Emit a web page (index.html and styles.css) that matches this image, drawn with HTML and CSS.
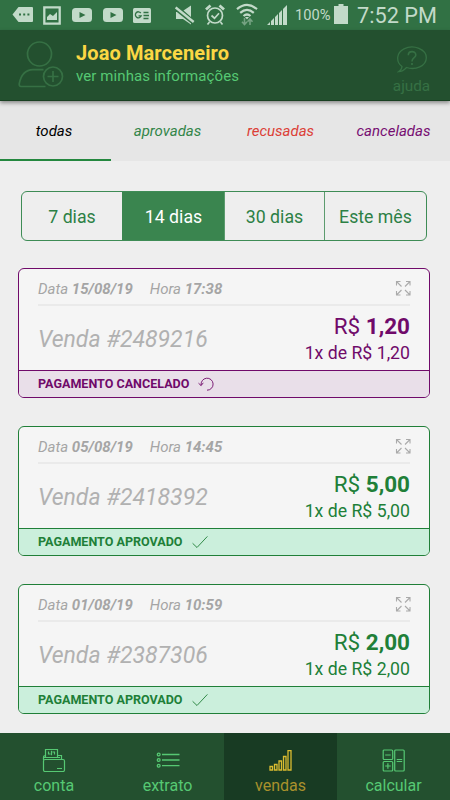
FILE: index.html
```html
<!DOCTYPE html>
<html lang="pt-BR">
<head>
<meta charset="utf-8">
<title>Vendas</title>
<link rel="stylesheet" href="styles.css">
</head>
<body>
<svg class="defs" width="0" height="0">
  <symbol id="expand" viewBox="0 0 16 16"><path d="M1.500 5.500V1.500h4M1.500 1.500l5 5M11 1.500h4v4M15 1.500L10 6.500M1.500 11v4h4M1.500 15l5-5M15 11v4h-4M15 15L10 10" fill="none" stroke="currentColor" stroke-width="1.100"/></symbol>
  <symbol id="check" viewBox="0 0 16 14"><path d="M.6 8.300L5 12.500 15.400 1.400" fill="none" stroke="currentColor" stroke-width=".9"/></symbol>
  <symbol id="undo" viewBox="0 0 16 14"><path d="M3.200 8.300A6 6 0 1 1 9 13.200M.5 6.200l2.600 2.400 2.200-2.800" fill="none" stroke="currentColor" stroke-width=".9"/></symbol>
</svg>
<div class="status">
  <svg class="s-msg" width="22" height="18" viewBox="0 0 22 18"><path d="M6.500 1H20a1 1 0 0 1 1 1v13a1 1 0 0 1-1 1H6.500L.5 8.500z" fill="#c2dac9"/><path d="M7 7.500h2v2H7zm4.200 0h2v2h-2zm4.200 0h2v2h-2z" fill="#317144"/></svg>
  <svg class="s-img" width="18" height="19" viewBox="0 0 18 19"><path d="M1.300 1.300h15.400v16.400H1.300z" fill="none" stroke="#c2dac9" stroke-width="2.300"/><path d="M4 14v-3l3-3 3 2 4-4v8z" fill="#c2dac9"/></svg>
  <svg class="s-yt" width="20" height="14" viewBox="0 0 20 14"><rect width="20" height="14" rx="3.500" fill="#c2dac9"/><path d="M7.500 4v6l6-3z" fill="#317144"/></svg>
  <svg class="s-yt" width="20" height="14" viewBox="0 0 20 14"><rect width="20" height="14" rx="3.500" fill="#c2dac9"/><path d="M7.500 4v6l6-3z" fill="#317144"/></svg>
  <svg class="s-news" width="18" height="15" viewBox="0 0 18 15"><rect width="18" height="15" rx="1.500" fill="#c2dac9"/><path d="M7.800 5A3 3 0 1 0 8.200 7.800H5.500M10.500 4.500H15.500M10.500 7.500H16M10.500 10.500H15.500" fill="none" stroke="#317144" stroke-width="1.300"/></svg>
  <svg class="s-mute" width="20" height="20" viewBox="0 0 20 20"><path d="M8.500 5.500L16 .5V12zM1 7h2.500L16 16.500v3L8 14H1z" fill="#c2dac9"/><path d="M.5 4.800L18.500 19.300" stroke="#317144" stroke-width="1.500"/><path d="M.7 2.500l18 14.500" stroke="#c2dac9" stroke-width="2.300"/></svg>
  <svg class="s-alarm" width="20" height="22" viewBox="0 0 20 22"><g fill="none" stroke="#c2dac9" stroke-width="1.700"><circle cx="10" cy="11.500" r="7.500"/><path d="M6.500 11.500l3 2.700 4.500-5M4.500 18l-2 2.500M15.500 18l2 2.500"/><path d="M1 5.500L5.500 1.500M19 5.500l-4.500-4" stroke-width="2.800"/></g></svg>
  <svg class="s-wifi" width="22" height="24" viewBox="0 0 22 24"><g fill="none" stroke="#c2dac9" stroke-width="2.200"><path d="M1 6.200q10-8.500 20 0M4.200 9.800q6.800-5.800 13.600 0M7.500 13q3.500-3 7 0"/></g><path d="M11 16.500l-2-2.500h4z" fill="#c2dac9"/><path d="M8.500 15v6M6 18.700L8.500 21.500l2.500-2.800M14 22v-6M11.500 18.800L14 16l2.500 2.800" fill="none" stroke="#76a383" stroke-width="1.600"/></svg>
  <svg class="s-signal" width="20" height="20" viewBox="0 0 20 20"><path d="M0 20L3 17V20zM4 16L7 13V20H4zM8 12L11 9V20H8zM12 8L15 5V20H12zM16 4L20 0V20H16z" fill="#c2dac9"/></svg>
  <span class="pct">100%</span>
  <svg class="s-bat" width="14" height="20" viewBox="0 0 14 20"><path d="M4.500 0h5v2H14v18H0V2h4.500z" fill="#c2dac9"/></svg>
  <span class="clock">7:52 PM</span>
</div>
<header class="header">
  <svg class="user" width="46" height="47" viewBox="0 0 46 47" fill="none" stroke="#367044" stroke-width="1.700"><circle cx="21.500" cy="13" r="12"/><path d="M27.500 45.500H3c-1.500 0-2-1.300-1.700-3C3 34 8 29 15 28.700h10.500"/><circle cx="35" cy="35.500" r="9.500"/><path d="M35 30v11M29.500 35.500h11"/></svg>
  <div class="who"><div class="name">Joao Marceneiro</div><div class="sub">ver minhas informações</div></div>
  <div class="help"><svg width="30" height="27" viewBox="0 0 30 27" fill="none" stroke="#367044" stroke-width="1.300"><path d="M5 20.500C-1.500 15.500-.5 6.500 7 2.800C17-2 29.300 3.500 29.300 11.700C29.300 20 18.500 24.500 9.500 21.500Q6 25.500 1.500 25.700Q5 23.500 5 20.500Z"/><path d="M11.300 9.200C11.300 4.500 18.800 4.500 18.800 9C18.800 12 15 11.500 15 15.500" stroke-width="1.600"/><path d="M15 17v2" stroke-width="1.700"/></svg><span>ajuda</span></div>
</header>
<nav class="tabs">
  <span class="tab on">todas</span><span class="tab ok">aprovadas</span><span class="tab no">recusadas</span><span class="tab off">canceladas</span>
</nav>
<main>
  <div class="range"><span>7 dias</span><span class="sel">14 dias</span><span>30 dias</span><span>Este mês</span></div>
  <article class="card cancelled">
    <div class="meta"><span class="date">Data <b>15/08/19</b></span><span class="hour">Hora <b>17:38</b></span><svg><use href="#expand"/></svg></div>
    <div class="body"><span class="sale">Venda #2489216</span><div class="amount"><div class="price">R$ <b>1,20</b></div><div class="parts">1x de R$ 1,20</div></div></div>
    <div class="state"><span>PAGAMENTO CANCELADO</span><svg><use href="#undo"/></svg></div>
  </article>
  <article class="card">
    <div class="meta"><span class="date">Data <b>05/08/19</b></span><span class="hour">Hora <b>14:45</b></span><svg><use href="#expand"/></svg></div>
    <div class="body"><span class="sale">Venda #2418392</span><div class="amount"><div class="price">R$ <b>5,00</b></div><div class="parts">1x de R$ 5,00</div></div></div>
    <div class="state"><span>PAGAMENTO APROVADO</span><svg><use href="#check"/></svg></div>
  </article>
  <article class="card">
    <div class="meta"><span class="date">Data <b>01/08/19</b></span><span class="hour">Hora <b>10:59</b></span><svg><use href="#expand"/></svg></div>
    <div class="body"><span class="sale">Venda #2387306</span><div class="amount"><div class="price">R$ <b>2,00</b></div><div class="parts">1x de R$ 2,00</div></div></div>
    <div class="state"><span>PAGAMENTO APROVADO</span><svg><use href="#check"/></svg></div>
  </article>
</main>
<nav class="bottom">
  <div><svg width="24" height="24" viewBox="0 0 24 24" fill="none" stroke="currentColor" stroke-width="1.200"><path d="M3.500 9.500V1.500H15.500V9.500M3.500 7.500Q1.500 7.500 1.500 9.500V12M1.500 9.500H18M15.500 7.500H19.500V11"/><rect x="1.500" y="11.500" width="21" height="12" rx="1.500"/><path d="M6.500 3.500v2.500H8.500M9.500 2.800v4.400M12.500 6.500V4H10.500M15 20.500h5"/></svg><span>conta</span></div>
  <div><svg width="24" height="24" viewBox="0 0 24 24" fill="none" stroke="currentColor" stroke-width="1.300"><circle cx="2.700" cy="6.500" r="1.400"/><circle cx="2.700" cy="12" r="1.400"/><circle cx="2.700" cy="17.700" r="1.400"/><path d="M6 6.500h17.500M6 12h17.500M6 17.700h17.500"/></svg><span>extrato</span></div>
  <div class="active"><svg width="24" height="24" viewBox="0 0 24 24" fill="none" stroke="#dabc30" stroke-width="1.300"><path d="M1 18.500h2.500v3.500H1zM5.500 16.500h2.500v5.500H5.500zM10 13h2.500v9h-2.500zM14.500 8.500h2.500v13.500H14.500zM19 2.700h3v19.300h-3z"/></svg><span>vendas</span></div>
  <div><svg width="24" height="24" viewBox="0 0 24 24" fill="none" stroke="currentColor" stroke-width="1.200"><rect x="1.200" y="2" width="9.500" height="9.500" rx="1"/><rect x="1.200" y="13.500" width="9.500" height="9.500" rx="1"/><rect x="12.700" y="2" width="9.500" height="21" rx="1"/><path d="M3.200 7h5.500M3.200 18h5.500M5.900 15.300v5.500M14.700 11.500h5.500M14.700 13.500h5.500"/></svg><span>calcular</span></div>
</nav>
</body>
</html>
```
FILE: styles.css
```css
* { box-sizing: border-box; }
body { margin: 0; width: 450px; height: 800px; overflow: hidden; background: #eee; font-family: Roboto, sans-serif; display: flex; flex-direction: column; }
svg { flex: none; display: block; }
.defs { position: absolute; }
span, .name, .sub, .price, .parts { white-space: nowrap; }
.status { height: 30px; flex: none; background: #317144; display: flex; align-items: center; color: #c2dac9; padding-left: 12px; }
.s-img { margin-left: 9px; }
.s-yt { margin-left: 11px; }
.s-news { margin-left: 10px; }
.s-mute { margin-left: 24px; }
.s-alarm { margin-left: 10px; }
.s-wifi { margin-left: 11px; }
.s-signal { margin-left: 9px; }
.pct { font-size: 14.7px; margin-left: 8px; width: 36px; }
.s-bat { margin-left: 3px; margin-top: -2px; }
.clock { font-size: 21.7px; margin-left: 9px; }
.header { height: 71px; flex: none; background: #23502f; display: flex; padding: 11px 20px 0 18px; box-shadow: 0 2px 4px rgba(0,0,0,.4); border-bottom: 1px solid #194022; z-index: 1; }
.who { margin-left: 12px; flex: 1; }
.name { font-size: 20px; letter-spacing: .1px; font-weight: 700; color: #fbd744; line-height: 24px; }
.sub { font-size: 15px; letter-spacing: .09px; color: #56c873; line-height: 20px; margin-top: 1px; }
.help { width: 37px; display: flex; flex-direction: column; align-items: center; color: #367044; font-size: 15.3px; padding-top: 5px; }
.help span { line-height: 18px; margin-top: 4px; }
.tabs { height: 60px; flex: none; background: #e6e6e6; display: grid; grid-template-columns: 111px 113px 113px 113px; font-size: 15px; font-style: italic; line-height: 61px; text-align: center; }
.tab { height: 60px; }
.tab.on { color: #000; border-bottom: 2px solid #24883f; padding-right: 3px; }
.tab.ok { color: #328549; }
.tab.no { color: #dc4037; }
.tab.off { color: #760d72; }
main { flex: 1; min-height: 0; padding: 30px 20px 0 18px; }
.range { height: 50px; margin: 0 3px 27px 3px; border: 1px solid #3e8c56; border-radius: 6px; display: grid; grid-template-columns: 100px 102px 100px 1fr; overflow: hidden; font-size: 17.7px; line-height: 50px; text-align: center; color: #2c8045; }
.range span + span { border-left: 1px solid #5c9b6e; }
.range .sel { background: #3a854f; color: #fff; border-color: #3a854f; }
.card { --c: #207f38; --soft: #cbefdc; height: 130px; border: 1px solid var(--c); border-radius: 6px; background: #f5f5f5; margin-bottom: 28px; overflow: hidden; color: var(--c); }
.cancelled { --c: #700a6a; --soft: #e9dfe9; }
.meta { height: 37px; margin: 0 19px; border-bottom: 2px solid #eaeaea; display: flex; align-items: center; padding-top: 4px; font-size: 15px; font-style: italic; color: #a5a5a5; }
.hour { margin-left: 17px; }
.meta svg { width: 16px; height: 16px; margin-left: auto; margin-right: -1px; color: #aaa; margin-top: -1px; }
.body { height: 64px; padding: 0 19px; display: flex; justify-content: space-between; }
.sale { font-size: 23px; font-style: italic; color: #b1b1b1; line-height: 68px; }
.amount { text-align: right; padding-top: 7px; }
.price { font-size: 22.5px; line-height: 26px; }
.parts { font-size: 17.7px; line-height: 25px; margin-top: 2px; }
.state { height: 27px; border-top: 1px solid var(--c); background: var(--soft); display: flex; align-items: center; padding: 0 0 1px 19px; font-size: 12.550px; font-weight: 700; }
.state svg { width: 16px; height: 14px; margin-left: 9px; }
.bottom { height: 67px; flex: none; background: #23502f; display: grid; grid-template-columns: 112px 112px 113px 113px; color: #56c873; font-size: 16px; }
.bottom div { display: flex; flex-direction: column; align-items: center; padding: 15px 4px 0 0; }
.bottom div + div { padding-right: 0; }
.bottom div:nth-child(2) { padding-right: 1px; }
.bottom span { line-height: 20px; margin-top: 4px; }
.bottom .active { background: #183b23; color: #a9912c; }
```
